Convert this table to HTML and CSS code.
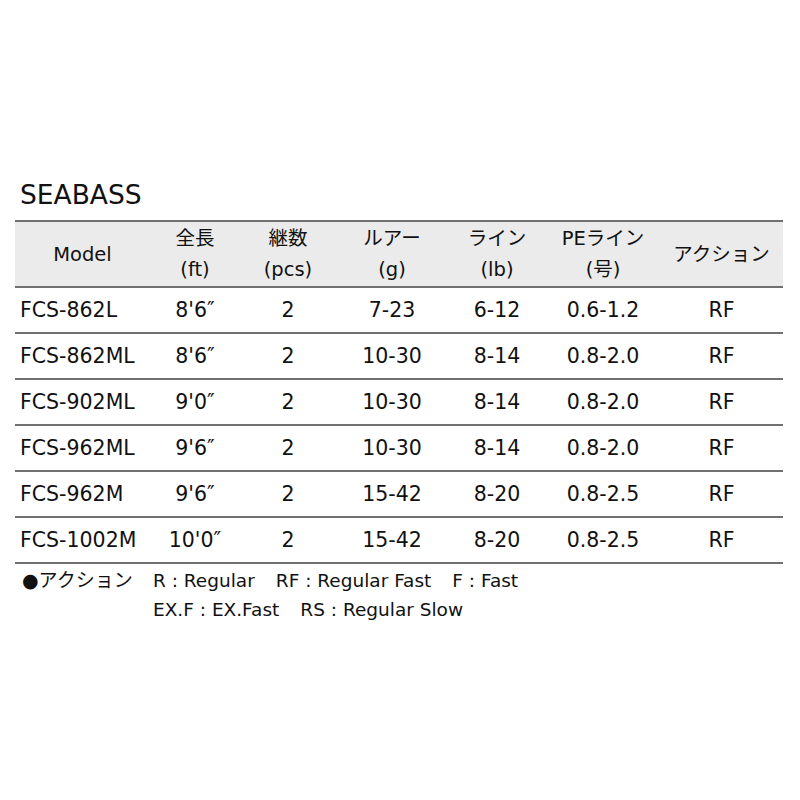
FILE: index.html
```html
<!DOCTYPE html>
<html lang="ja">
<head>
<meta charset="utf-8">
<link rel="stylesheet" href="styles.css">
</head>
<body>
<div class="page">
  <h1 class="title">SEABASS</h1>
  <table class="spec">
    <colgroup>
      <col class="c1"><col class="c2"><col class="c3"><col class="c4"><col class="c5"><col class="c6"><col class="c7">
    </colgroup>
    <thead>
      <tr>
        <th>Model</th>
        <th>全長<br>(ft)</th>
        <th>継数<br>(pcs)</th>
        <th>ルアー<br>(g)</th>
        <th>ライン<br>(lb)</th>
        <th>PEライン<br>(号)</th>
        <th>アクション</th>
      </tr>
    </thead>
    <tbody>
      <tr><td class="model">FCS-862L</td><td>8'6″</td><td>2</td><td>7-23</td><td>6-12</td><td>0.6-1.2</td><td>RF</td></tr>
      <tr><td class="model">FCS-862ML</td><td>8'6″</td><td>2</td><td>10-30</td><td>8-14</td><td>0.8-2.0</td><td>RF</td></tr>
      <tr><td class="model">FCS-902ML</td><td>9'0″</td><td>2</td><td>10-30</td><td>8-14</td><td>0.8-2.0</td><td>RF</td></tr>
      <tr><td class="model">FCS-962ML</td><td>9'6″</td><td>2</td><td>10-30</td><td>8-14</td><td>0.8-2.0</td><td>RF</td></tr>
      <tr><td class="model">FCS-962M</td><td>9'6″</td><td>2</td><td>15-42</td><td>8-20</td><td>0.8-2.5</td><td>RF</td></tr>
      <tr><td class="model">FCS-1002M</td><td>10'0″</td><td>2</td><td>15-42</td><td>8-20</td><td>0.8-2.5</td><td>RF</td></tr>
    </tbody>
  </table>
  <div class="legend">
    <div class="legend-label">●アクション</div>
    <div class="legend-items">
      <div class="legend-line"><span>R : Regular</span><span>RF : Regular Fast</span><span>F : Fast</span></div>
      <div class="legend-line"><span>EX.F : EX.Fast</span><span>RS : Regular Slow</span></div>
    </div>
  </div>
</div>
</body>
</html>
```

FILE: styles.css
```css
html, body {
  margin: 0;
  padding: 0;
  background: #ffffff;
}
body {
  font-family: "DejaVu Sans", "Noto Sans CJK JP", sans-serif;
  color: #111111;
}
.page {
  padding: 178px 17px 0 15px;
}
.title {
  margin: 0 0 8px 5px;
  font-size: 26.5px;
  font-weight: 400;
  line-height: 34px;
  color: #111;
}
.spec {
  width: 768px;
  border-collapse: collapse;
  table-layout: fixed;
}
.c1 { width: 135px; }
.c2 { width: 90px; }
.c3 { width: 96px; }
.c4 { width: 112px; }
.c5 { width: 98px; }
.c6 { width: 114px; }
.c7 { width: 123px; }
.spec thead tr {
  background: #ebebeb;
  border-top: 2px solid #707070;
  border-bottom: 2px solid #707070;
}
.spec th {
  height: 64px;
  padding: 0;
  font-size: 19.5px;
  font-weight: 400;
  line-height: 31px;
  text-align: center;
  vertical-align: middle;
}
.spec tbody tr {
  border-bottom: 2px solid #707070;
}
.spec td {
  height: 44px;
  padding: 0;
  font-size: 20.5px;
  line-height: 28px;
  text-align: center;
  vertical-align: middle;
}
.spec td.model {
  text-align: left;
  padding-left: 5px;
}
.legend {
  display: flex;
  padding: 2px 0 0 7px;
  font-size: 18.5px;
  line-height: 29px;
}
.legend-label {
  width: 131px;
  font-size: 19px;
}
.legend-line {
  display: flex;
  gap: 21px;
}
```
